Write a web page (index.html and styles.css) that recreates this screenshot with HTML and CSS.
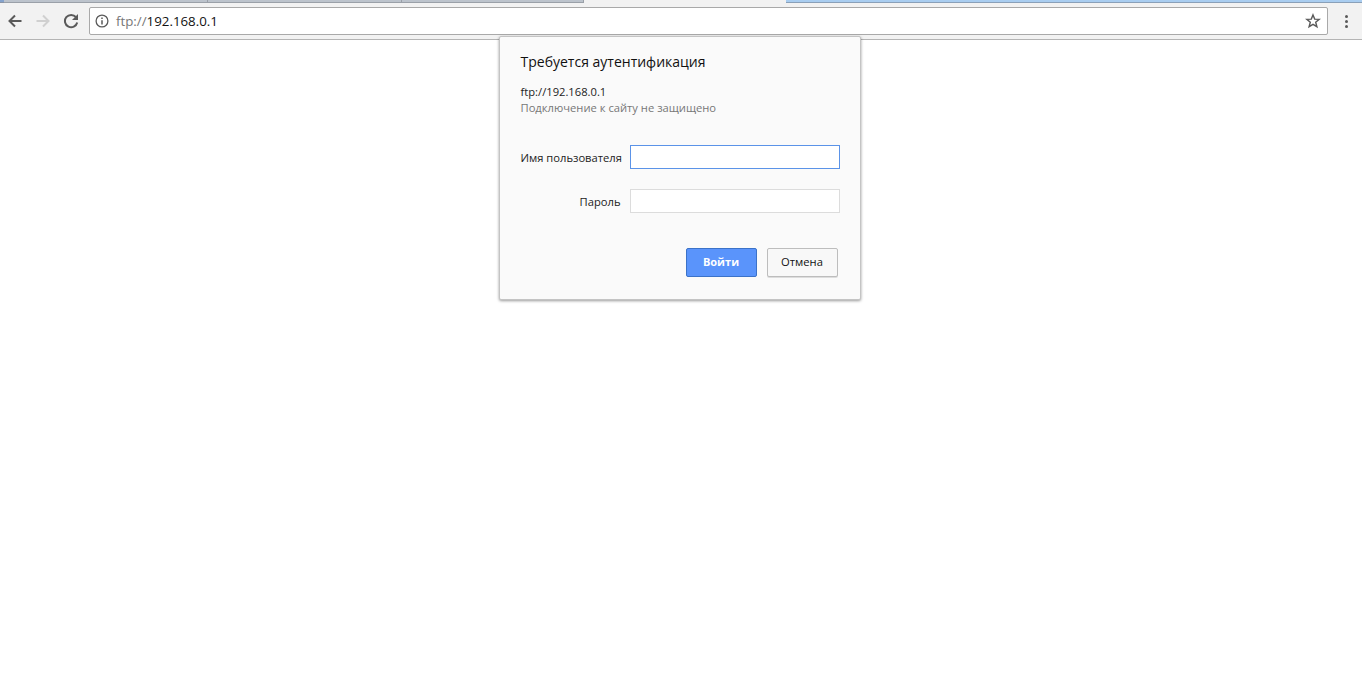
FILE: index.html
```html
<!DOCTYPE html>
<html>

<head>
    <meta charset="utf-8" />
    <title>ftp://192.168.0.1</title>
    <link rel="stylesheet" href="styles.css">
</head>

<body>
    <div class="tabstrip">
        <div class="frame-corner"></div>
        <div class="tab tab-first"></div>
        <div class="tab tab-second"></div>
        <div class="tab tab-third"></div>
        <div class="tab-active"></div>
        <div class="frame"></div>
    </div>
    <div class="toolbar">
        <svg class="navicon" width="16" height="16" viewBox="0 0 16 16">
            <path d="M14.5 8H2.5M8 2.5L2.5 8L8 13.5" fill="none" stroke="#5a5a5a" stroke-width="2" />
        </svg>
        <svg class="navicon" width="16" height="16" viewBox="0 0 16 16">
            <path d="M1.5 8H13.5M8 2.5L13.5 8L8 13.5" fill="none" stroke="#d0d0d0" stroke-width="2" />
        </svg>
        <svg class="navicon" width="16" height="16" viewBox="0 0 16 16">
            <path d="M13 4.2A6.2 6.2 0 1 0 14.2 9.5" fill="none" stroke="#5a5a5a" stroke-width="2" />
            <path d="M15 1V7H9Z" fill="#5a5a5a" />
        </svg>
        <div class="omnibox">
            <svg class="infoicon" width="14" height="14" viewBox="0 0 14 14">
                <circle cx="7" cy="7" r="5.9" fill="none" stroke="#5a5a5a" stroke-width="1.3" />
                <path d="M7 6.2V10.4M7 3.6V5" fill="none" stroke="#5a5a5a" stroke-width="1.5" />
            </svg>
            <span class="url"><span class="url-scheme">ftp://</span>192.168.0.1</span>
            <svg class="star" width="16" height="16" viewBox="0 0 16 16">
                <path d="M8 1.9L9.7 6.1L14.2 6.4L10.7 9.3L11.9 13.7L8 11.3L4.1 13.7L5.3 9.3L1.8 6.4L6.3 6.1Z" fill="none" stroke="#5a5a5a" stroke-width="1.4" />
            </svg>
        </div>
        <div class="menu-dots">
            <span></span>
            <span></span>
            <span></span>
        </div>
    </div>

    <div class="page">
        <div class="dialog">
            <h1 class="dialog-title">Требуется аутентификация</h1>
            <div class="dialog-host">ftp://192.168.0.1</div>
            <div class="dialog-note">Подключение к сайту не защищено</div>
            <div class="field field-user">
                <label class="field-label">Имя пользователя</label>
                <div class="field-input field-input-focus"></div>
            </div>
            <div class="field field-pass">
                <label class="field-label">Пароль</label>
                <div class="field-input"></div>
            </div>
            <div class="buttons">
                <button class="btn btn-login">Войти</button>
                <button class="btn btn-cancel">Отмена</button>
            </div>
        </div>
    </div>
</body>

</html>
```

FILE: styles.css
```css
* {
    box-sizing: border-box;
}

body,
html {
    width: 100%;
    height: 100%;
    margin: 0;
    overflow: hidden;
    background-color: white;
    font-family: "Open Sans", "Noto Sans", sans-serif;
}

.tabstrip {
    display: flex;
    height: 3px;
    background-color: #f2f2f2;
}

.frame-corner {
    width: 4px;
    background-color: #84a2cc;
    border-bottom: 1px solid #8a94a4;
}

.tab {
    height: 3px;
    background-color: #bcc3cc;
    border-bottom: 1px solid #9aa0a8;
    border-right: 1px solid #9aa0a8;
}

.tab-first {
    width: 204px;
}

.tab-second {
    width: 194px;
}

.tab-third {
    width: 182px;
}

.tab-active {
    width: 202px;
}

.frame {
    flex: 1;
    background-color: #a9cdf0;
    border-bottom: 1px solid #8aa0b8;
}

.toolbar {
    display: flex;
    align-items: center;
    height: 37px;
    padding: 0 0 0 7px;
    background-color: #f2f2f2;
    border-bottom: 1px solid #b4b4b4;
}

.navicon {
    flex: none;
    margin-right: 12px;
}

.omnibox {
    display: flex;
    align-items: center;
    width: 1239px;
    height: 28px;
    margin-left: -2px;
    padding: 0 6px 0 5px;
    background-color: white;
    border: 1px solid #a9a9a9;
    border-radius: 2px;
}

.infoicon {
    flex: none;
}

.url {
    flex: 1;
    margin-left: 7px;
    font-size: 13.3px;
    color: #111;
}

.url-scheme {
    color: #777;
}

.menu-dots {
    display: flex;
    flex-direction: column;
    gap: 2px;
    margin-left: 17px;
}

.menu-dots span {
    width: 3px;
    height: 3px;
    background-color: #5a5a5a;
    border-radius: 50%;
}

.page {
    display: flex;
    justify-content: center;
}

.dialog {
    position: relative;
    top: -4px;
    width: 362px;
    height: 264px;
    margin-left: -3px;
    padding: 15px 20px 0 21px;
    background-color: #fafafa;
    border: 1px solid #c4c4c4;
    border-radius: 2px;
    box-shadow: 0 1px 3px rgba(0, 0, 0, 0.4);
}

.dialog-title {
    margin: 0 0 12px;
    font-size: 14px;
    font-weight: normal;
    line-height: 20px;
    color: #111;
}

.dialog-host {
    font-size: 11.2px;
    line-height: 16px;
    color: #222;
}

.dialog-note {
    font-size: 11.2px;
    line-height: 16px;
    color: #777;
}

.field {
    display: flex;
    align-items: center;
    gap: 9px;
}

.field-user {
    margin-top: 29px;
}

.field-pass {
    margin-top: 20px;
}

.field-label {
    width: 100px;
    font-size: 11.2px;
    text-align: right;
    white-space: nowrap;
    color: #222;
}

.field-input {
    width: 210px;
    height: 24px;
    background-color: white;
    border: 1px solid #dcdcdc;
}

.field-input-focus {
    border-color: #5b93e8;
}

.buttons {
    display: flex;
    justify-content: flex-end;
    gap: 10px;
    margin-top: 35px;
    padding-right: 2px;
}

.btn {
    width: 71px;
    height: 29px;
    padding: 0 0 2px;
    font-family: inherit;
    font-size: 11.2px;
    border-radius: 2px;
}

.btn-login {
    font-size: 11px;
    font-weight: bold;
    color: white;
    background-color: #5a94fb;
    border: 1px solid #3b72c8;
}

.btn-cancel {
    color: #111;
    background-color: #f8f8f8;
    border: 1px solid #bdbdbd;
    box-shadow: 0 1px 0 #ddd;
}
```
